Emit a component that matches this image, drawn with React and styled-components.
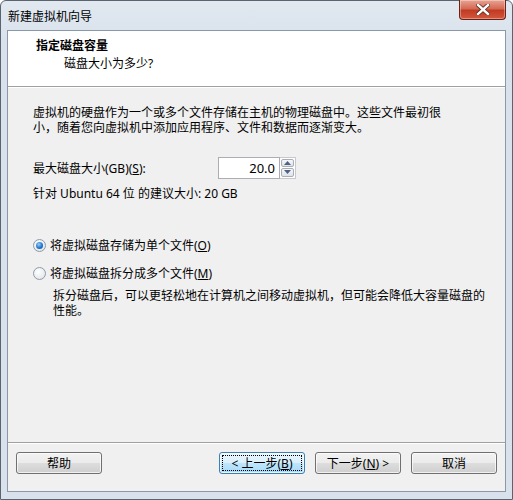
import React, { useState } from "react";
import styled, { createGlobalStyle } from "styled-components";

const GlobalStyle = createGlobalStyle`
  html, body {
    margin: 0;
    padding: 0;
    background: #ffffff;
  }
  body {
    font-family: "Noto Sans", "Noto Sans CJK SC", sans-serif;
    font-size: 12px;
    color: #000;
  }
`;

const Window = styled.div`
  box-sizing: border-box;
  width: 513px;
  height: 500px;
  display: flex;
  flex-direction: column;
  border: 1px solid #5a6470;
  border-radius: 6px 6px 0 0;
  background: linear-gradient(#e1e8f0, #d9e2ec 40px, #d9e2ec);
  padding: 0 6px 7px 6px;
`;

const TitleBar = styled.div`
  height: 29px;
  display: flex;
  align-items: center;
  justify-content: space-between;
`;

const TitleText = styled.span`
  font-size: 12px;
  padding-left: 1px;
  color: #000;
  margin-top: 1px;
`;

const CloseButton = styled.button`
  align-self: flex-start;
  margin-top: -1px;
  width: 47px;
  height: 20px;
  border: 1px solid #6b2116;
  border-top: none;
  border-radius: 0 0 4px 4px;
  background: linear-gradient(#e8a493, #d46a53 45%, #c13b22 55%, #d2583e);
  display: flex;
  align-items: center;
  justify-content: center;
  padding: 0;
  box-shadow: inset 0 0 0 1px rgba(255, 255, 255, 0.35);
`;

const Panel = styled.div`
  flex: 1;
  display: flex;
  flex-direction: column;
  border: 1px solid #8b98a8;
  background: #f0f0f0;
`;

const Header = styled.div`
  height: 56px;
  background: #ffffff;
  border-bottom: 1px solid #a0a0a0;
  box-shadow: 0 1px 0 #ffffff;
  padding: 4px 0 0 28px;
  box-sizing: border-box;
`;

const HeaderTitle = styled.div`
  font-weight: bold;
  line-height: 18px;
  margin-top: 2px;
`;

const HeaderSub = styled.div`
  padding-left: 28px;
  line-height: 18px;
`;

const Body = styled.div`
  flex: 1;
  padding: 18px 0 0 25px;
  white-space: nowrap;
`;

const Paragraph = styled.p`
  margin: ${(p) => p.$top || 0}px 0 0 0;
  line-height: 15px;
  padding-left: ${(p) => p.$indent || 0}px;
`;

const SizeRow = styled.div`
  display: flex;
  align-items: center;
  margin-top: 21px;
  height: 23px;
`;

const Label = styled.span`
  width: 185px;
`;

const SpinBox = styled.div`
  display: flex;
  align-items: stretch;
  height: 22px;
`;

const NumberInput = styled.input`
  box-sizing: border-box;
  width: 62px;
  height: 22px;
  border: 1px solid #abadb3;
  text-align: right;
  font: inherit;
  font-size: 13px;
  padding: 0 4px 0 0;
  background: #fff;
  outline: none;
`;

const SpinButtons = styled.div`
  display: flex;
  flex-direction: column;
  gap: 1px;
  padding: 1px;
  border: 1px solid #c7c9cd;
  border-left: none;
  background: #fff;
`;

const SpinBtn = styled.div`
  width: 13px;
  flex: 1;
  box-sizing: border-box;
  border: 1px solid #a8adb6;
  border-radius: 2px;
  background: linear-gradient(#f6f7f9, #dfe3e8);
  display: flex;
  align-items: center;
  justify-content: center;
`;

const Hint = styled.div`
  margin-top: 6px;
  line-height: 18px;
`;

const RadioGroup = styled.div`
  display: flex;
  flex-direction: column;
  gap: 10px;
  margin-top: 33px;
`;

const RadioRow = styled.label`
  display: flex;
  align-items: center;
  gap: 4px;
  height: 18px;
  cursor: default;
`;

const RadioCircle = styled.span`
  box-sizing: border-box;
  width: 13px;
  height: 13px;
  border-radius: 50%;
  border: 1px solid #8e9aa8;
  background: radial-gradient(circle at 40% 35%, #ffffff, #dcdfe3);
  display: flex;
  align-items: center;
  justify-content: center;
  &::after {
    content: "";
    display: ${(p) => (p.$checked ? "block" : "none")};
    width: 7px;
    height: 7px;
    border-radius: 50%;
    background: radial-gradient(circle at 40% 35%, #8fd0ff, #1a6fc4 60%, #0c4f9a);
  }
`;

const Footer = styled.div`
  height: 39px;
  border-top: 1px solid #a0a0a0;
  box-shadow: inset 0 1px 0 #ffffff;
  display: flex;
  align-items: flex-start;
  padding: 9px 8px 0 8px;
  gap: 10px;
`;

const Spacer = styled.div`
  flex: 1;
`;

const Button = styled.button`
  box-sizing: border-box;
  width: 86px;
  height: 22px;
  font: inherit;
  font-size: 12px;
  color: #000;
  border: 1px solid ${(p) => (p.$focused ? "#3c7fb1" : "#707070")};
  border-radius: 3px;
  background: ${(p) =>
    p.$focused
      ? "linear-gradient(#eaf6fd 0%, #d9f0fc 50%, #bee6fd 51%, #a7d9f5 100%)"
      : "linear-gradient(#f2f2f2 0%, #ebebeb 50%, #dddddd 51%, #cfcfcf 100%)"};
  box-shadow: inset 0 0 0 1px rgba(255, 255, 255, 0.7);
  padding: 0;
  display: flex;
  align-items: center;
  justify-content: center;
  position: relative;
  &::after {
    content: "";
    display: ${(p) => (p.$focused ? "block" : "none")};
    position: absolute;
    inset: 2px;
    border: 1px dotted #000;
  }
`;

const Key = styled.u`
  text-underline-offset: 1px;
`;

const CloseIcon = () => (
  <svg width="14" height="11" viewBox="0 0 14 11">
    <path
      d="M2 1 L12 10 M12 1 L2 10"
      stroke="#5a2a20"
      strokeWidth="4"
      strokeLinecap="square"
    />
    <path
      d="M2 1 L12 10 M12 1 L2 10"
      stroke="#ffffff"
      strokeWidth="2.4"
      strokeLinecap="square"
    />
  </svg>
);

const Arrow = ({ up }) => (
  <svg width="7" height="4" viewBox="0 0 7 4">
    <path d={up ? "M0 4 L3.5 0 L7 4 Z" : "M0 0 L3.5 4 L7 0 Z"} fill="#4d6185" />
  </svg>
);

const App = () => {
  const [split, setSplit] = useState(false);
  const [size, setSize] = useState("20.0");

  return (
    <Window>
      <GlobalStyle />
      <TitleBar>
        <TitleText>新建虚拟机向导</TitleText>
        <CloseButton>
          <CloseIcon />
        </CloseButton>
      </TitleBar>
      <Panel>
        <Header>
          <HeaderTitle>指定磁盘容量</HeaderTitle>
          <HeaderSub>磁盘大小为多少?</HeaderSub>
        </Header>
        <Body>
          <Paragraph>
            虚拟机的硬盘作为一个或多个文件存储在主机的物理磁盘中。这些文件最初很
            <br />
            小，随着您向虚拟机中添加应用程序、文件和数据而逐渐变大。
          </Paragraph>
          <SizeRow>
            <Label>
              最大磁盘大小(GB)(<Key>S</Key>):
            </Label>
            <SpinBox>
              <NumberInput value={size} onChange={(e) => setSize(e.target.value)} />
              <SpinButtons>
                <SpinBtn>
                  <Arrow up />
                </SpinBtn>
                <SpinBtn>
                  <Arrow />
                </SpinBtn>
              </SpinButtons>
            </SpinBox>
          </SizeRow>
          <Hint>针对 Ubuntu 64 位 的建议大小: 20 GB</Hint>
          <RadioGroup>
            <RadioRow onClick={() => setSplit(false)}>
              <RadioCircle $checked={!split} />
              <span>
                将虚拟磁盘存储为单个文件(<Key>O</Key>)
              </span>
            </RadioRow>
            <RadioRow onClick={() => setSplit(true)}>
              <RadioCircle $checked={split} />
              <span>
                将虚拟磁盘拆分成多个文件(<Key>M</Key>)
              </span>
            </RadioRow>
          </RadioGroup>
          <Paragraph $indent={20} $top={6}>
            拆分磁盘后，可以更轻松地在计算机之间移动虚拟机，但可能会降低大容量磁盘的
            <br />
            性能。
          </Paragraph>
        </Body>
        <Footer>
          <Button>帮助</Button>
          <Spacer />
          <Button $focused>
            &lt; 上一步(<Key>B</Key>)
          </Button>
          <Button>
            下一步(<Key>N</Key>) &gt;
          </Button>
          <Button>取消</Button>
        </Footer>
      </Panel>
    </Window>
  );
};

export default App;
